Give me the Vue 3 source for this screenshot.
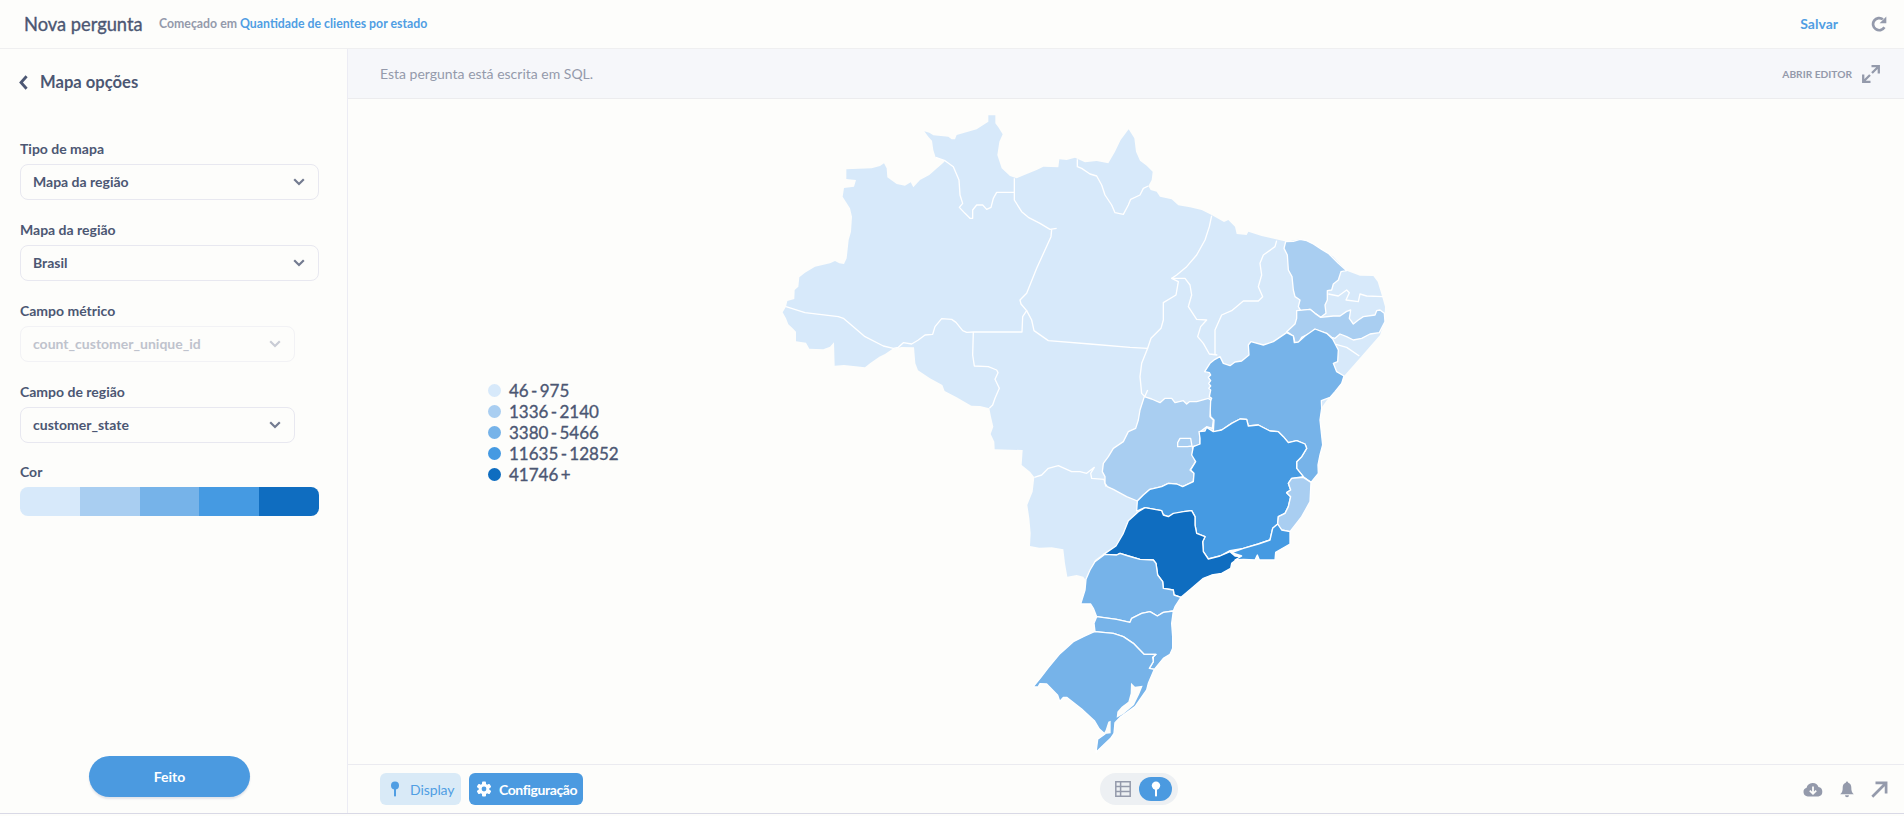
<script setup>
const ranges = [
  { label: '46 - 975', color: '#d7e9fa' },
  { label: '1336 - 2140', color: '#a9cef1' },
  { label: '3380 - 5466', color: '#76b3e9' },
  { label: '11635 - 12852', color: '#459ae2' },
  { label: '41746 +', color: '#0f6dc0' },
]

const fields = [
  { label: 'Tipo de mapa', value: 'Mapa da região' },
  { label: 'Mapa da região', value: 'Brasil' },
  { label: 'Campo métrico', value: 'count_customer_unique_id', narrow: true, disabled: true },
  { label: 'Campo de região', value: 'customer_state', narrow: true },
]

// Country silhouette; one map unit is a third of a pixel.
const country =
  '229,208 229,237 258,240 252,260 222,264 218,290 240,325 246,350 243,395 236,420 230,475 222,492 208,490 195,483 180,490 135,500 105,518 88,532 85,560 74,570 73,597 52,603 48,620 38,637 48,655 55,673 68,685 78,695 78,724 108,728 118,746 160,748 180,740 192,727 194,797 222,795 285,802 300,790 328,770 345,762 368,746 395,741 432,742 436,790 444,811 480,835 517,855 524,873 560,892 604,917 630,918 658,925 663,950 670,980 662,1002 673,1025 674,1048 758,1050 755,1095 780,1115 793,1132 788,1175 772,1215 778,1255 782,1300 780,1338 808,1343 845,1342 880,1348 885,1390 892,1430 920,1425 940,1430 948,1442 975,1380 1005,1358 1038,1338 1060,1300 1075,1262 1105,1235 1250,1150 1600,1000 1722,828 1775,768 1830,705 1843,665 1845,620 1835,585 1823,545 1810,528 1770,527 1730,512 1690,470 1630,432 1590,418 1550,425 1505,415 1475,408 1435,395 1430,405 1400,402 1395,380 1375,360 1362,366 1325,345 1295,330 1260,322 1225,316 1205,298 1170,290 1160,275 1142,270 1135,258 1145,240 1148,215 1130,197 1110,182 1098,155 1093,115 1076,88 1052,120 1035,155 1015,190 980,183 945,187 915,173 890,180 868,178 865,202 820,200 800,210 765,224 740,235 720,228 695,205 682,165 688,125 698,103 685,82 676,70 676,46 655,46 655,65 620,88 560,105 555,118 545,118 535,110 490,106 478,98 463,94 475,110 486,122 490,150 497,172 525,182 520,188 495,210 478,225 450,240 430,262 422,247 405,257 380,252 352,232 350,205 342,190 330,198 305,205'

const northBorders = [
  '497,172 525,182 550,200 567,240 570,285 578,310 568,322 585,340 600,355 608,355 608,330 620,315 638,315 650,328 663,322 670,295 680,277 732,277',
  '733,235 733,300 755,335 775,352 810,370 840,388 860,385',
  '845,388 843,410 800,505 770,580 750,600 753,612 770,632 758,650 756,696 610,696 590,697 578,692 558,667 545,658 515,656 495,680 488,703 465,705 445,720 425,732 400,728 385,742 370,745 340,738 285,710 250,680 220,655 205,650 105,638 48,620',
  '770,632 785,660 792,692 835,722 960,732 1080,742 1133,745',
  '610,696 608,765 613,798 655,800 680,810 684,818 675,838 688,865 675,895 668,915 658,925',
  '922,178 922,200 935,205 960,222 980,228 995,255 1005,285 1025,315 1035,338 1060,343 1075,315 1082,298 1110,285 1120,265 1135,258',
  '1325,347 1318,380 1305,420 1280,465 1250,500 1220,525 1205,535 1225,545 1218,585 1180,608 1180,660 1173,685 1143,715 1133,745 1115,790 1110,830 1115,880 1124,890 1133,870',
  '1205,535 1245,535 1260,555 1265,585 1255,620 1280,658 1310,660 1292,680 1283,710 1300,730 1318,762 1342,765',
  '1520,422 1515,440 1480,465 1470,490 1475,525 1465,560 1478,590 1465,603 1420,603 1385,632 1355,645 1335,690 1335,762',
  '1675,582 1705,588 1730,570 1738,578 1728,600 1765,605 1770,582 1790,588 1840,590',
  '1698,733 1730,742 1768,768',
  '793,1132 815,1125 835,1105 865,1097 905,1115 930,1115 950,1120 973,1102 962,1120 965,1135 1002,1138 1008,1160',
]

const north = [
  { name: 'CE', level: 1, points: '617,425 640,424 660,418 680,422 700,432 725,448 745,460 775,490 800,512 783,515 775,540 760,552 755,570 742,572 742,600 735,615 738,640 722,652 705,640 690,628 662,632 655,620 660,600 645,590 640,570 636,530 625,510 622,465 612,445' },
  { name: 'PE', level: 1, points: '650,632 690,628 705,640 722,652 760,648 780,648 800,634 812,630 808,655 820,672 835,660 850,650 885,645 890,632 900,630 913,640 915,665 898,698 870,702 845,715 820,720 800,710 780,702 765,715 755,712 740,700 705,688 690,700 665,712 655,730 645,728 640,708 620,695 645,672 650,655' },
]

const east = [
  { name: 'BA', level: 2, points: '74,155 90,130 105,118 120,110 130,130 150,137 165,126 185,123 207,105 205,75 213,65 250,75 280,65 320,38 340,48 343,68 355,66 375,48 405,27 440,40 458,57 475,90 473,125 460,130 470,155 492,168 485,190 465,215 450,232 424,242 425,265 420,300 428,375 420,405 414,435 415,460 393,487 370,470 350,445 350,425 365,410 380,385 375,372 350,362 325,368 310,350 295,335 270,333 235,315 205,318 200,298 180,297 155,310 125,330 100,337 102,300 92,290 88,250 95,235 88,230 92,210 86,205 92,198 86,190 92,182 85,172 92,165 88,158' },
  { name: 'GO', level: 1, points: '-107,230 -85,237 -60,248 -45,235 -25,235 -15,248 10,242 20,252 28,245 50,245 85,235 92,240 90,290 100,300 97,325 80,320 60,335 60,375 37,380 40,405 47,425 30,450 42,460 40,485 8,500 -10,492 -35,490 -55,500 -90,508 -110,525 -128,543 -160,530 -200,508 -218,500 -225,490 -225,470 -233,455 -230,430 -215,410 -200,385 -170,365 -155,335 -133,325 -125,300 -120,270' },
  { name: 'DF', level: 1, points: '0,355 32,355 36,378 22,380 -7,380 -7,368' },
  { name: 'MG', level: 3, points: '-130,573 -128,543 -110,525 -90,508 -55,500 -35,490 -10,492 8,500 40,485 42,460 32,450 47,425 35,405 40,380 60,372 60,355 57,335 75,333 80,322 100,335 125,330 155,310 180,297 200,298 205,318 235,315 270,333 295,335 310,350 325,368 350,362 375,372 380,385 365,410 350,425 350,445 370,470 335,475 325,490 332,510 320,518 332,530 325,560 315,580 295,590 293,612 278,625 270,660 235,672 190,685 150,692 120,708 85,717 70,695 68,665 75,650 50,640 45,615 45,590 35,572 10,575 -35,590 -50,585 -55,572 -105,563' },
  { name: 'ES', level: 1, points: '335,475 370,472 393,487 390,545 365,590 330,635 305,630 293,612 295,590 315,580 325,560 332,530 320,518 332,510 325,490' },
  { name: 'SP', level: 4, points: '-230,704 -192,678 -170,640 -155,602 -125,575 -105,563 -55,572 -50,585 -35,590 -20,580 10,575 35,572 45,590 45,615 50,640 75,650 68,665 70,695 85,717 120,708 150,695 165,708 185,710 165,722 155,730 152,745 125,760 95,765 70,775 35,805 3,832 -18,825 -20,810 -50,805 -52,785 -67,765 -72,730 -80,720 -120,718 -155,708 -180,700 -190,705' },
  { name: 'RJ', level: 3, points: '293,612 305,630 330,635 330,672 287,697 285,720 238,720 232,705 225,720 190,718 165,720 185,708 155,698 190,685 235,672 270,660 278,625' },
]

const south = [
  { name: 'PR', level: 2, points: '255,43 290,45 300,40 325,48 360,58 400,60 408,70 413,105 428,125 430,145 460,150 462,165 483,172 465,200 460,213 430,217 412,228 390,215 365,220 335,235 330,247 290,238 230,230 220,205 212,192 182,192 195,150 198,118 210,90 225,65' },
  { name: 'SC', level: 2, points: '230,230 290,238 330,247 335,235 365,220 390,215 412,228 430,217 460,213 455,250 458,290 458,325 450,343 430,355 403,388 388,385 400,365 400,350 408,343 372,343 340,310 310,290 280,280 225,275 222,250' },
  { name: 'RS', level: 2, points: '218,277 225,275 280,280 310,290 340,310 372,343 408,343 398,352 400,365 388,385 403,388 385,430 380,450 345,500 300,532 285,548 282,580 272,595 228,637 233,598 255,582 238,567 223,542 185,507 140,472 130,472 119,484 113,466 80,432 60,431 54,441 40,440 62,413 85,383 118,343 130,332 160,305 190,290' },
]
const lagoons = [
  '333,428 345,440 368,437 358,462 342,495 310,522 290,533 292,515 305,500 325,485 332,460',
  '265,545 272,542 272,580 250,583 257,570',
]

const regionGroups = [
  { key: 'north', shift: 'translate(930 0)', states: north },
  { key: 'east', shift: 'translate(1230 660)', states: east },
  { key: 'south', shift: 'translate(750 1320)', states: south },
]
</script>

<template>
  <div class="app">
    <header class="topbar">
      <h1>Nova pergunta</h1>
      <p class="origin">Começado em <a>Quantidade de clientes por estado</a></p>
      <a class="save">Salvar</a>
      <svg class="refresh" viewBox="0 0 16 16" width="16" height="16">
        <path d="M13.4 11.3A6.100 6.100 0 1 1 11.900 3.300" fill="none" stroke="currentColor" stroke-width="2.7" />
        <path d="M15.300.6v6.600H8.600z" fill="currentColor" />
      </svg>
    </header>

    <div class="body">
      <aside class="sidebar">
        <div class="heading">
          <svg viewBox="0 0 9 15" width="9" height="15"><path d="M7.6 1.2 2 7.5l5.6 6.3" fill="none" stroke="currentColor" stroke-width="2.8" /></svg>
          <h2>Mapa opções</h2>
        </div>
        <div v-for="f in fields" :key="f.label" class="field" :class="{ narrow: f.narrow, disabled: f.disabled }">
          <label>{{ f.label }}</label>
          <div class="select">
            <span>{{ f.value }}</span>
            <svg viewBox="0 0 12 8" width="12" height="8"><path d="M1.2 1.3 6 6l4.8-4.7" fill="none" stroke="currentColor" stroke-width="2.2" /></svg>
          </div>
        </div>
        <div class="field color">
          <label>Cor</label>
          <div class="ramp">
            <i v-for="r in ranges" :key="r.label" :style="{ background: r.color }"></i>
          </div>
        </div>
        <button class="done">Feito</button>
      </aside>

      <main class="main">
        <div class="sqlbar">
          <span class="note">Esta pergunta está escrita em SQL.</span>
          <span class="open">ABRIR EDITOR</span>
          <svg viewBox="0 0 20 20" width="20" height="20" fill="none" stroke="currentColor" stroke-width="2.3">
            <path d="M10.5 2.2h7.3v7.3M17.3 2.7 11 9M2.2 10.5v7.3h7.3M2.7 17.3 9 11" />
          </svg>
        </div>

        <section class="viz">
          <ul class="legend">
            <li v-for="r in ranges" :key="r.label"><i :style="{ background: r.color }"></i>{{ r.label }}</li>
          </ul>
          <svg class="map" viewBox="0 0 1890 1980" width="630" height="660">
            <polygon :points="country" :fill="ranges[0].color" />
            <polyline v-for="(b, i) in northBorders" :key="i" class="border" :points="b" />
            <g v-for="g in regionGroups" :key="g.key" :transform="g.shift">
              <polygon v-for="s in g.states" :key="s.name" class="state" :points="s.points" :fill="ranges[s.level].color" />
            </g>
            <g transform="translate(750 1320)">
              <polygon v-for="(l, i) in lagoons" :key="i" class="lagoon" :points="l" />
            </g>
          </svg>
        </section>

        <footer class="bottombar">
          <div class="side">
            <button class="chip soft">
              <svg viewBox="0 0 10 17" width="10" height="17" fill="currentColor"><circle cx="5" cy="4.6" r="4" /><path d="M4 8h2v6.5L5 16l-1-1.5z" /></svg>
              Display
            </button>
            <button class="chip strong">
              <svg viewBox="0 0 16 16" width="16" height="16">
                <g fill="currentColor">
                  <circle cx="8" cy="8" r="5.4" />
                  <rect v-for="a in [0, 60, 120]" :key="a" x="6" y=".6" width="4" height="14.8" rx="1" :transform="`rotate(${a} 8 8)`" />
                </g>
                <circle cx="8" cy="8" r="2.4" fill="#509ee3" />
              </svg>
              Configuração
            </button>
          </div>
          <div class="toggle">
            <svg class="table" viewBox="0 0 16 16" width="16" height="16" fill="none" stroke="currentColor" stroke-width="1.5">
              <path d="M.8.8h14.4v14.4H.8zM.8 5.6h14.4M.8 10.4h14.4M5.6.8v14.4" />
            </svg>
            <span class="on">
              <svg viewBox="0 0 10 17" width="10" height="17" fill="currentColor"><circle cx="5" cy="4.6" r="4.2" /><path d="M4 8h2v6.5L5 16l-1-1.5z" /></svg>
            </span>
          </div>
          <div class="side actions">
            <svg viewBox="0 0 20 15" width="20" height="15">
              <path d="M4.8 14.4a4.4 4.4 0 0 1-1.2-8.6A6.2 6.2 0 0 1 15.5 5a4.8 4.8 0 0 1 0 9.4z" fill="currentColor" />
              <path d="M10 4.4v7M6.8 8.6l3.2 3.2 3.2-3.2" fill="none" stroke="#fdfdfb" stroke-width="1.8" />
            </svg>
            <svg viewBox="0 0 14 17" width="14" height="17" fill="currentColor">
              <path d="M7 .4c.8 0 1.2.6 1.2 1.4C10.4 2.500 11.300 4.300 11.300 6.500c0 3.500.5 5 2.500 6.800H.2c2-1.800 2.500-3.300 2.500-6.800 0-2.200.9-4 3.100-4.700C5.800 1 6.200.4 7 .4z" /><path d="M5 14.300h4a2 2 0 0 1-4 0z" />
            </svg>
            <svg viewBox="0 0 17 17" width="17" height="17" fill="none" stroke="currentColor" stroke-width="2.700">
              <path d="M4.500 1.900h10.600V12.500M15 2 1.300 15.700" />
            </svg>
          </div>
        </footer>
      </main>
    </div>
    <div class="baseline"></div>
  </div>
</template>

<style>
body {
  margin: 0;
  background: #fdfdfc;
}
</style>

<style scoped>
.app {
  width: 1904px;
  height: 816px;
  overflow: hidden;
  display: flex;
  flex-direction: column;
  background: #fdfdfb;
  color: #4c5773;
  font-family: Lato, "Liberation Sans", sans-serif;
}
.app * { box-sizing: border-box; }
h1, h2, p, ul { margin: 0; padding: 0; }
svg { display: block; flex: none; }
button { font: inherit; border: 0; padding: 0; }
.topbar {
  height: 49px;
  flex: none;
  display: flex;
  align-items: center;
  padding: 0 17px 1px 24px;
  border-bottom: 1px solid #efeff0;
}
h1 {
  width: 119px;
  font-size: 18.3px;
  font-weight: 400;
  line-height: 24px;
  white-space: nowrap;
  -webkit-text-stroke: 0.35px currentColor;
}
.origin { margin-left: 16px; font-size: 12.3px; font-weight: 700; color: #949aab; white-space: nowrap; }
.origin a, .save { color: #509ee3; }
.save { margin-left: auto; font-size: 14px; font-weight: 700; }
.refresh { margin-left: 33px; color: #949aab; }
.body { flex: none; height: 764px; display: flex; }
.sidebar {
  width: 348px;
  flex: none;
  display: flex;
  flex-direction: column;
  padding: 21px 28px 16px 20px;
  border-right: 1px solid #ececf4;
}
.heading { display: flex; align-items: center; gap: 12px; height: 24px; margin-bottom: 46px; }
.heading svg { margin-left: -1px; }
h2 { font-size: 16.6px; font-weight: 700; }
.field { height: 81px; font-size: 14px; font-weight: 700; }
.field label { display: block; height: 24px; line-height: 18px; }
.select {
  height: 36px;
  display: flex;
  align-items: center;
  justify-content: space-between;
  padding: 0 13px 1px 12px;
  border: 1px solid #e8e8f0;
  border-radius: 8px;
}
.narrow .select { width: 275px; }
.disabled .select { color: #bfc3cd; border-color: #f2f2f5; }
.select svg { color: #737b90; }
.disabled .select svg { color: #c9ccd5; }
.color label { height: 23px; line-height: 16px; }
.ramp { display: flex; width: 299px; height: 29px; border-radius: 8px; overflow: hidden; }
.ramp i { flex: 1; }
.done {
  width: 161px;
  height: 41px;
  margin: auto 0 0 69px;
  border-radius: 21px;
  background: #4b9ae0;
  color: #fff;
  font-size: 14px;
  font-weight: 700;
  box-shadow: 0 2px 2px #e2e4ea;
}
.main { flex: 1; display: flex; flex-direction: column; }
.sqlbar {
  height: 50px;
  flex: none;
  display: flex;
  align-items: center;
  padding: 0 23px 0 32px;
  background: #f6f7fa;
  border-bottom: 1px solid #ececee;
  color: #949aab;
}
.note { font-size: 14px; }
.open { margin-left: auto; margin-right: 9px; font-size: 10.2px; font-weight: 700; }
.viz { flex: 1; display: flex; align-items: flex-start; }
.legend {
  list-style: none;
  width: 282px;
  margin: 281px 0 0 140px;
  font-size: 17px;
  word-spacing: -2px;
  -webkit-text-stroke: 0.35px currentColor;
}
.legend li { display: flex; align-items: center; height: 21px; gap: 8px; }
.legend i { width: 13px; height: 13px; border-radius: 50%; }
.map { margin-top: 1px; }
.border, .state { stroke: #fff; stroke-width: 4; stroke-linejoin: round; }
.border { fill: none; }
.lagoon { fill: #fdfdfb; }
.bottombar {
  height: 49px;
  flex: none;
  display: flex;
  align-items: center;
  padding: 0 16px 0 32px;
  border-top: 1px solid #ebebf0;
}
.side { width: 720px; flex: none; display: flex; align-items: center; gap: 8px; }
.chip {
  display: flex;
  align-items: center;
  height: 32px;
  border-radius: 6px;
  font-size: 14px;
  font-weight: 700;
  white-space: nowrap;
}
.chip.soft { width: 81px; padding-left: 10px; gap: 10px; background: #d9eaf7; color: #509ee3; font-weight: 400; letter-spacing: -0.1px; }
.chip.strong { width: 114px; padding-left: 7px; gap: 7px; background: #4b9ae0; color: #fff; letter-spacing: -0.4px; }
.toggle {
  width: 78px;
  height: 32px;
  display: flex;
  align-items: center;
  gap: 8px;
  padding-left: 15px;
  border-radius: 16px;
  background: #edf0f3;
  color: #949aab;
}
.on {
  width: 33px;
  height: 24px;
  display: flex;
  align-items: center;
  justify-content: center;
  border-radius: 12px;
  background: #4b9ae0;
  color: #fff;
}
.actions { width: auto; flex: 1; justify-content: flex-end; gap: 17px; color: #949aab; }
.baseline { height: 1px; flex: none; background: #d9d9e6; }
</style>
